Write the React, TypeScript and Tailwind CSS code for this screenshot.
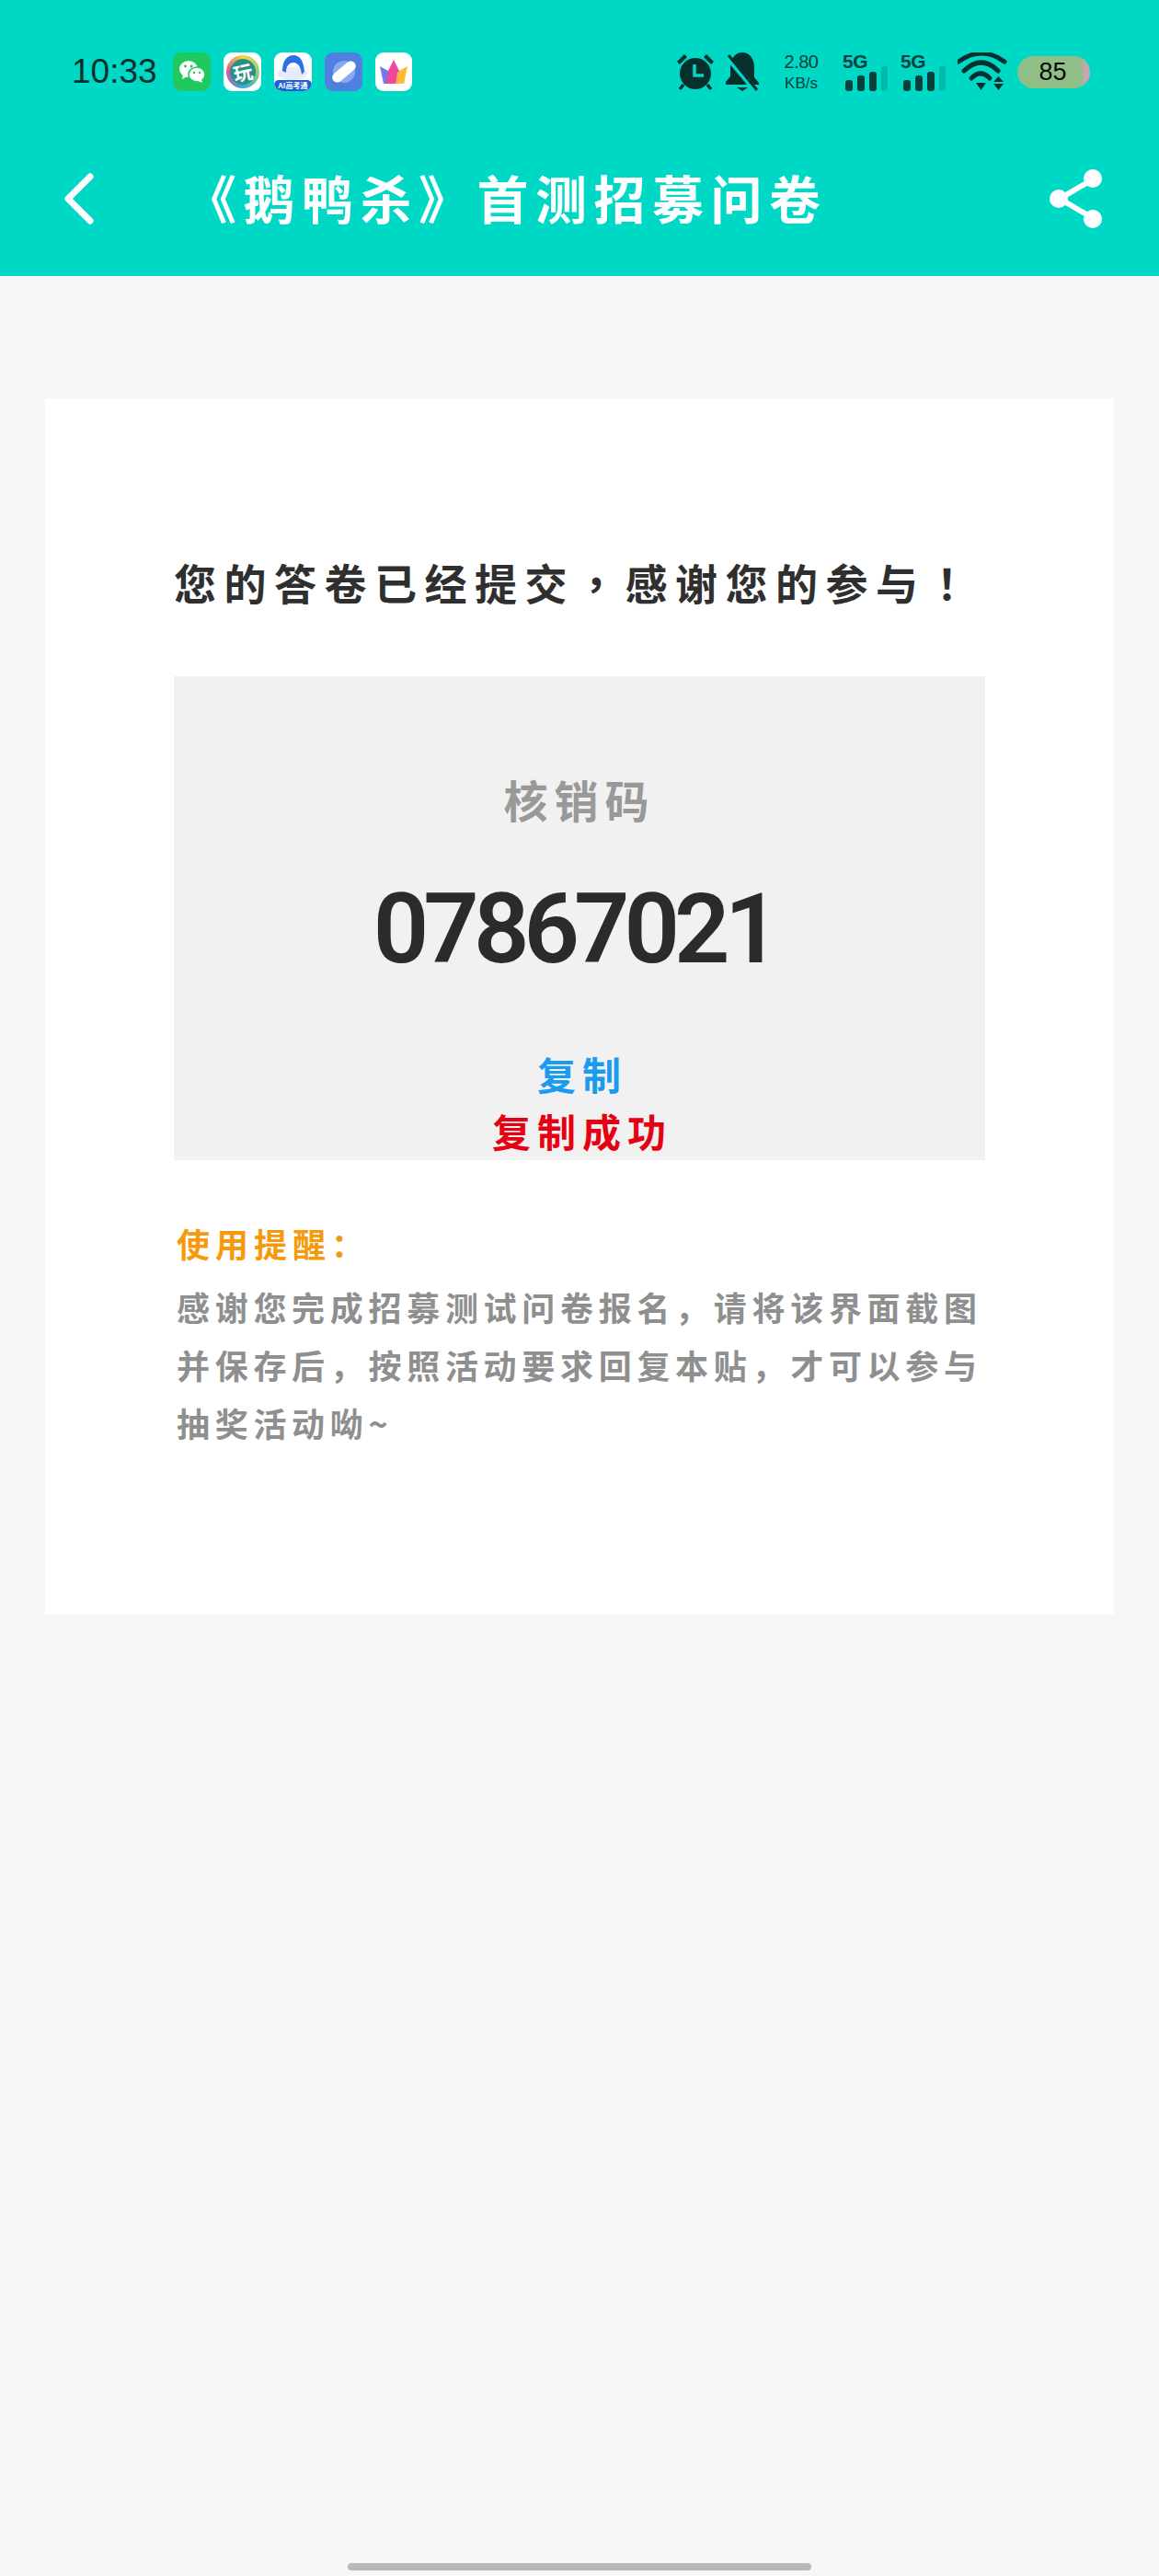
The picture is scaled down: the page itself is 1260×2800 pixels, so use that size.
const cjk = "font-['Noto_Sans_CJK_SC','Noto_Sans',sans-serif]";

function Wechat() {
  return (
    <div className="flex h-[42px] w-[41px] items-center justify-center rounded-[9px] bg-[#1fc960]">
      <svg width="30" height="28" viewBox="0 0 30 28">
        <ellipse cx="11" cy="11" rx="10" ry="9" fill="#fff" />
        <path d="M5 17l-1 5 6-3z" fill="#fff" />
        <ellipse cx="20" cy="17" rx="9" ry="8" fill="#fff" stroke="#1fc960" strokeWidth="1.5" />
        <path d="M25 22l1 4-5-2z" fill="#fff" />
        <circle cx="7.5" cy="8" r="1.4" fill="#1fc960" />
        <circle cx="14" cy="8" r="1.4" fill="#1fc960" />
        <circle cx="17" cy="15" r="1.2" fill="#1fc960" />
        <circle cx="23" cy="15" r="1.2" fill="#1fc960" />
      </svg>
    </div>
  );
}

function PlayIcon() {
  return (
    <div className="flex h-[42px] w-[41px] items-center justify-center rounded-[9px] bg-white">
      <div className="flex h-[36px] w-[36px] items-center justify-center rounded-full bg-[conic-gradient(#f3d640,#8fd07a,#3aa7d8,#d65a9a,#f3d640)]">
        <div className={`flex h-[28px] w-[28px] -rotate-12 items-center justify-center rounded-full bg-[#2a8f86] text-[21px] leading-none font-bold text-white ${cjk}`}>
          玩
        </div>
      </div>
    </div>
  );
}

function QuarkIcon() {
  return (
    <div className="flex h-[42px] w-[41px] flex-col items-center overflow-hidden rounded-[9px] bg-white">
      <svg width="41" height="30" viewBox="0 0 41 30">
        <ellipse cx="20" cy="23" rx="16" ry="7" fill="#e3ecf8" />
        <path d="M9 20C9 8 15 3 21 3c7 0 11 6 12 18l-3 3c-1-8-4-13-9-13-5 0-8 4-8 11z" fill="#2f6fe6" />
      </svg>
      <div className={`flex w-full flex-1 items-center justify-center rounded-t-[5px] bg-[#1f5fd8] text-[8px] leading-none font-bold text-white ${cjk}`}>
        AI高考通
      </div>
    </div>
  );
}

function PlanetIcon() {
  return (
    <div className="flex h-[42px] w-[41px] items-center justify-center rounded-[9px] bg-[#4f80e0]">
      <svg width="34" height="34" viewBox="0 0 34 34">
        <circle cx="17" cy="17" r="12" fill="#86aaf0" />
        <rect x="2" y="11.500" width="30" height="11" rx="5.500" fill="#fff" transform="rotate(-40 17 17)" />
      </svg>
    </div>
  );
}

function CrownIcon() {
  return (
    <div className="flex h-[42px] w-[40px] items-center justify-center rounded-[9px] bg-white">
      <svg width="32" height="28" viewBox="0 0 32 28">
        <path d="M1 8l9 5 2 14H5z" fill="#6f7cf0" />
        <path d="M31 8l-9 5-2 14h7z" fill="#fbb934" />
        <path d="M16 1l6 12-2 14H8l2-14z" fill="#f0489c" />
        <path d="M20 14l-2 13h9l2-12z" fill="#fdbb3a" opacity=".85" />
      </svg>
    </div>
  );
}

function SignalBars() {
  return (
    <div className="flex w-[50px] flex-col">
      <span className="font-['Liberation_Sans',sans-serif] text-[21px] leading-[19px] font-bold tracking-[-0.5px] text-[#06403d]">5G</span>
      <div className="-mt-[4px] ml-[3px] flex items-end gap-[5px]">
        <div className="h-[12px] w-[8px] rounded-[3px] bg-[#06403d]" />
        <div className="h-[17px] w-[8px] rounded-[3px] bg-[#06403d]" />
        <div className="h-[21px] w-[8px] rounded-[3px] bg-[#06403d]" />
        <div className="h-[27px] w-[7px] rounded-[3px] bg-[#06403d]/20" />
      </div>
    </div>
  );
}

function StatusBar() {
  return (
    <div className="flex h-[99px] items-end justify-between pr-[75px] pl-[78px]">
      <div className="flex items-center">
        <span className="w-[110px] font-['Liberation_Sans',sans-serif] text-[37px] leading-[42px] text-[#06302e]">10:33</span>
        <div className="flex gap-[14px]">
          <Wechat />
          <PlayIcon />
          <QuarkIcon />
          <PlanetIcon />
          <CrownIcon />
        </div>
      </div>
      <div className="flex items-center">
        <svg width="44" height="42" viewBox="0 0 44 42" className="mr-[11px]">
          <path d="M2 10l8-8 3 3-8 8zM42 10l-8-8-3 3 8 8z" fill="#06302e" />
          <circle cx="22" cy="23" r="17" fill="#06302e" />
          <path d="M21 13v12h10" fill="none" stroke="#00d8c6" strokeWidth="3.500" />
          <path d="M9 35l-4 5M35 35l4 5" stroke="#06302e" strokeWidth="3.500" />
        </svg>
        <svg width="36" height="42" viewBox="0 0 36 42" className="mr-[26px]">
          <path d="M18 0c8 0 13 7 13 16v11l5 6v2H0v-3l5-6V16C5 7 10 0 18 0z" fill="#06302e" />
          <path d="M1 4l32 38" stroke="#00d8c6" strokeWidth="6" />
          <path d="M3 3l31 38" stroke="#06302e" strokeWidth="3" />
          <path d="M12 38h12l-6 4z" fill="#06302e" />
        </svg>
        <div className="mr-[25px] flex w-[40px] flex-col items-center font-['Liberation_Sans',sans-serif] text-[#06403d]">
          <span className="text-[20px] leading-[20px] tracking-[-0.5px]">2.80</span>
          <span className="mt-[5px] text-[17px] leading-[17px]">KB/s</span>
        </div>
        <div className="mr-[13px]"><SignalBars /></div>
        <SignalBars />
        <svg width="54" height="42" viewBox="0 0 54 42" className="mr-[11px] ml-[12px]">
          <path d="M1 10Q26-8 51 10" fill="none" stroke="#06302e" strokeWidth="5" strokeLinecap="round" />
          <path d="M7 20Q26 2 44 20" fill="none" stroke="#06302e" strokeWidth="5" strokeLinecap="round" />
          <path d="M15 28Q25 18 35 28" fill="none" stroke="#06302e" strokeWidth="5" strokeLinecap="round" />
          <path d="M20 33h11l-5.500 8z" fill="#06302e" />
          <path d="M44.500 26L50 32H39zM39 34h11l-5.500 7z" fill="#06302e" />
        </svg>
        <div className="relative flex h-[35px] w-[79px] items-center justify-center overflow-hidden rounded-full bg-[#8fbf86]">
          <div className="absolute top-0 right-0 h-full w-[8px] bg-[#c2a8ac]" />
          <span className="relative -ml-[2px] font-['Liberation_Sans',sans-serif] text-[27px] leading-none text-[#0a0a0a]">85</span>
        </div>
      </div>
    </div>
  );
}

function NavBar() {
  return (
    <div className="flex h-[201px] items-start justify-between pt-[83px] pr-[60px] pl-[68px]">
      <div className="flex items-center">
        <svg width="36" height="60" viewBox="0 0 36 60" className="mt-[4px]">
          <path d="M30 6L6 30l24 24" fill="none" stroke="#fff" strokeWidth="7" strokeLinecap="round" strokeLinejoin="round" />
        </svg>
        <h1 className={`ml-[97px] text-[56px] leading-[64px] font-bold tracking-[7.500px] whitespace-nowrap text-white ${cjk}`}>
          《鹅鸭杀》首测招募问卷
        </h1>
      </div>
      <svg width="60" height="66" viewBox="0 0 60 66" className="mt-[1px]">
        <path d="M48 12L12 33l36 21" fill="none" stroke="#fff" strokeWidth="6" />
        <circle cx="48" cy="11" r="10" fill="#fff" />
        <circle cx="11" cy="33" r="10" fill="#fff" />
        <circle cx="48" cy="55" r="10" fill="#fff" />
      </svg>
    </div>
  );
}

export default function App() {
  return (
    <div className={`relative h-[2800px] w-[1260px] bg-[#f7f7f7] ${cjk}`}>
      <div className="h-[300px] bg-[#00d8c6]">
        <StatusBar />
        <NavBar />
      </div>

      <div className="mx-[49px] mt-[133px] h-[1322px] bg-white px-[140px] pt-[165px]">
        <h2 className="text-[46px] leading-[68px] font-bold tracking-[8.500px] whitespace-nowrap text-[#2f2f2f]">
          您的答卷已经提交<span className="font-['Noto_Sans_CJK_TC',sans-serif]">，</span>感谢您的参与<span className="font-['Noto_Sans_CJK_TC',sans-serif]">！</span>
        </h2>

        <div className="mt-[69px] flex h-[526px] w-[882px] flex-col items-center bg-[#f1f1f1] pt-[99px]">
          <div className="text-[48px] leading-[68px] font-bold tracking-[7px] text-[#999999]">核销码</div>
          <div className="mt-[53px] -ml-[12px] font-['Roboto',sans-serif] text-[106px] leading-[110px] font-semibold tracking-[-6px] text-[#2b2b2b]">
            07867021
          </div>
          <div className="mt-[72px] ml-[6px] text-[42px] leading-[60px] font-bold tracking-[7px] text-[#1a9bf0]">复制</div>
          <div className="mt-[2px] ml-[6px] text-[42px] leading-[60px] font-bold tracking-[7px] text-[#e60012]">复制成功</div>
        </div>

        <div className="mt-[64px] pl-[3px] text-[36px] leading-[52px] font-bold tracking-[6px] text-[#f59a0c]">使用提醒：</div>
        <p className="mt-[12px] w-[885px] pl-[3px] text-[36px] leading-[63px] font-bold tracking-[5.700px] text-[#8f8f8f]">
          感谢您完成招募测试问卷报名，请将该界面截图并保存后，按照活动要求回复本贴，才可以参与抽奖活动呦~
        </p>
      </div>

      <div className="absolute top-[2786px] left-[378px] h-[8px] w-[504px] rounded-full bg-[#b8b8b8]" />
    </div>
  );
}
